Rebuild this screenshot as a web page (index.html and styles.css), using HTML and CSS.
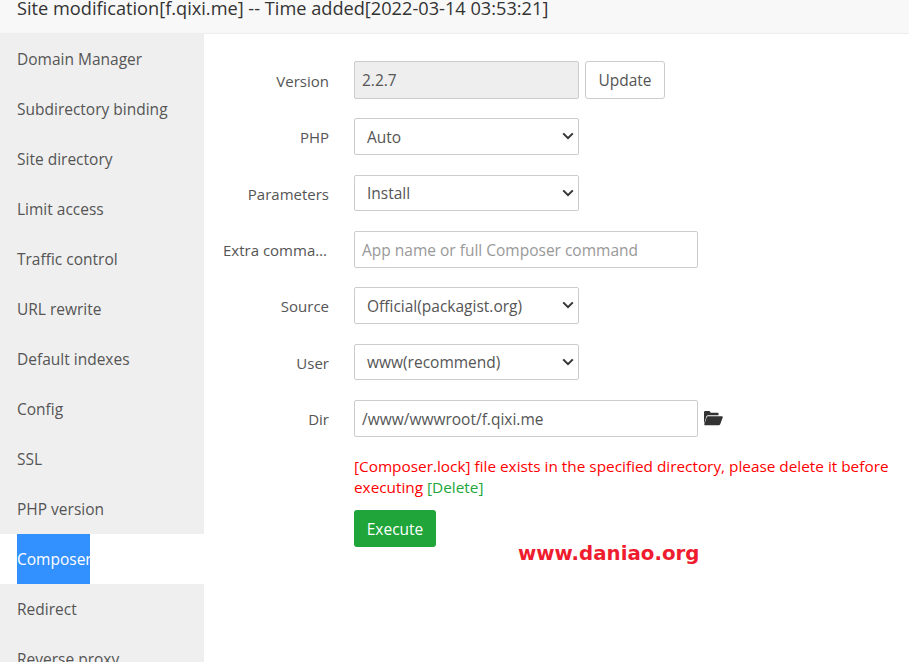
FILE: index.html
```html
<!DOCTYPE html>
<html lang="en">
<head>
<meta charset="utf-8">
<title>Site modification</title>
<link rel="stylesheet" href="styles.css">
</head>
<body>
<header class="title-bar">Site modification[f.qixi.me] -- Time added[2022-03-14 03:53:21]</header>
<div class="layout">
  <nav class="side">
    <div class="side-item"><span>Domain Manager</span></div>
    <div class="side-item"><span>Subdirectory binding</span></div>
    <div class="side-item"><span>Site directory</span></div>
    <div class="side-item"><span>Limit access</span></div>
    <div class="side-item"><span>Traffic control</span></div>
    <div class="side-item"><span>URL rewrite</span></div>
    <div class="side-item"><span>Default indexes</span></div>
    <div class="side-item"><span>Config</span></div>
    <div class="side-item"><span>SSL</span></div>
    <div class="side-item"><span>PHP version</span></div>
    <div class="side-item active"><span>Composer</span></div>
    <div class="side-item"><span>Redirect</span></div>
    <div class="side-item"><span>Reverse proxy</span></div>
  </nav>
  <main class="main">
    <div class="row row-version">
      <label class="lab">Version</label>
      <input class="ctl ctl-short ctl-readonly" value="2.2.7" readonly>
      <button class="btn-update" type="button">Update</button>
    </div>
    <div class="row">
      <label class="lab">PHP</label>
      <div class="sel-wrap"><select class="sel"><option>Auto</option></select><svg class="chev" viewBox="0 0 12 8"><path d="M1.2 1.4 6 6.2l4.8-4.8" fill="none" stroke="#333" stroke-width="2"/></svg></div>
    </div>
    <div class="row row-params">
      <label class="lab">Parameters</label>
      <div class="sel-wrap"><select class="sel"><option>Install</option></select><svg class="chev" viewBox="0 0 12 8"><path d="M1.2 1.4 6 6.2l4.8-4.8" fill="none" stroke="#333" stroke-width="2"/></svg></div>
    </div>
    <div class="row row-tall">
      <label class="lab">Extra command</label>
      <input class="ctl ctl-long" placeholder="App name or full Composer command">
    </div>
    <div class="row">
      <label class="lab">Source</label>
      <div class="sel-wrap"><select class="sel"><option>Official(packagist.org)</option></select><svg class="chev" viewBox="0 0 12 8"><path d="M1.2 1.4 6 6.2l4.8-4.8" fill="none" stroke="#333" stroke-width="2"/></svg></div>
    </div>
    <div class="row">
      <label class="lab">User</label>
      <div class="sel-wrap"><select class="sel"><option>www(recommend)</option></select><svg class="chev" viewBox="0 0 12 8"><path d="M1.2 1.4 6 6.2l4.8-4.8" fill="none" stroke="#333" stroke-width="2"/></svg></div>
    </div>
    <div class="row row-dir">
      <label class="lab">Dir</label>
      <input class="ctl ctl-long" value="/www/wwwroot/f.qixi.me">
      <svg class="folder" viewBox="0 0 20 16"><path d="M1 14.6V2.4C1 1.600 1.500 1 2.300 1h3.400c.8 0 1.200.3 1.600 1l.4.700h6.600c.8 0 1.300.5 1.300 1.300v1.200H5.200c-.9 0-1.500.4-1.900 1.200L1 14.600Z" fill="#333"/><path d="M5 6.200h13.700c.9 0 1.300.6 1 1.400l-2.500 6.600c-.3.700-.8 1-1.500 1H2c-.6 0-.9-.5-.6-1l2.300-6.900c.3-.7.700-1.100 1.300-1.100Z" fill="#333"/></svg>
    </div>
    <p class="msg">[Composer.lock] file exists in the specified directory, please delete it before executing <a class="del">[Delete]</a></p>
    <button class="btn-exec" type="button">Execute</button>
    <div class="mark">www.daniao.org</div>
  </main>
</div>
</body>
</html>
```
FILE: styles.css
```css
* { box-sizing: border-box; }
html, body { margin: 0; height: 662px; overflow: hidden; background: #fff; }
body { font-family: "Open Sans", "Noto Sans", sans-serif; font-size: 15.5px; color: #555; display: flex; flex-direction: column; }
.title-bar { height: 34px; flex: none; overflow: hidden; padding: 0 17px; background: #f8f8f8; border-bottom: 1px solid #eee; font-size: 18.2px; line-height: 17px; color: #333; white-space: nowrap; }
.layout { flex: 1; display: flex; min-height: 0; }
.side { width: 204px; flex: none; background: #efefef; overflow: hidden; }
.side-item { height: 50px; padding-left: 17px; line-height: 51px; white-space: nowrap; }
.side-item.active { background: #fff; }
.side-item.active span { display: block; width: 73px; height: 50px; background: #3390ff; color: #fff; overflow: hidden; }
.main { flex: 1; position: relative; padding-top: 27px; padding-left: 19px; }
.row { display: flex; align-items: center; height: 36.5px; margin-bottom: 20px; }
.row-version { height: 38px; margin-bottom: 19px; }
.row-params { margin-bottom: 19.5px; }
.row-tall { height: 37px; margin-bottom: 19.5px; }
.row-dir { margin-bottom: 19px; }
.lab { width: 106px; margin-right: 25px; flex: none; padding-top: 2px; font-size: 15px; text-align: right; white-space: nowrap; overflow: hidden; text-overflow: ellipsis; }
.ctl { height: 100%; border: 1px solid #ccc; border-radius: 2px; padding: 1px 7px 0; font: inherit; color: #555; background: #fff; outline: none; }
.ctl::placeholder { color: #999; }
.ctl-short { width: 225px; }
.ctl-long { width: 344px; }
.ctl-readonly { background: #eee; padding-top: 0; }
.btn-update { margin-left: 6px; width: 80px; height: 100%; border: 1px solid #ccc; border-radius: 3px; background: #fff; color: #555; font: inherit; padding: 0; }
.sel-wrap { position: relative; width: 225px; height: 100%; }
.sel { appearance: none; width: 100%; height: 100%; border: 1px solid #ccc; border-radius: 2px; background: #fff; padding: 1px 0 0 12px; font: inherit; color: #555; outline: none; }
.chev { position: absolute; right: 5px; top: 14px; width: 12px; height: 8px; }
.folder { margin-left: 5px; width: 20px; height: 16px; }
.msg { width: 540px; margin: 0 0 12.5px 131px; font-size: 15.35px; line-height: 21px; color: #f00; }
.del { color: #20a53a; }
.btn-exec { display: block; margin-left: 131px; width: 82px; height: 37px; border: 0; border-radius: 3px; background: #20a53a; color: #fff; font: inherit; padding: 0; }
.mark { position: absolute; left: 314px; top: 506px; font-family: "DejaVu Sans", sans-serif; font-weight: 700; font-size: 19.8px; line-height: 28px; color: #ee1c2e; white-space: nowrap; }
```
